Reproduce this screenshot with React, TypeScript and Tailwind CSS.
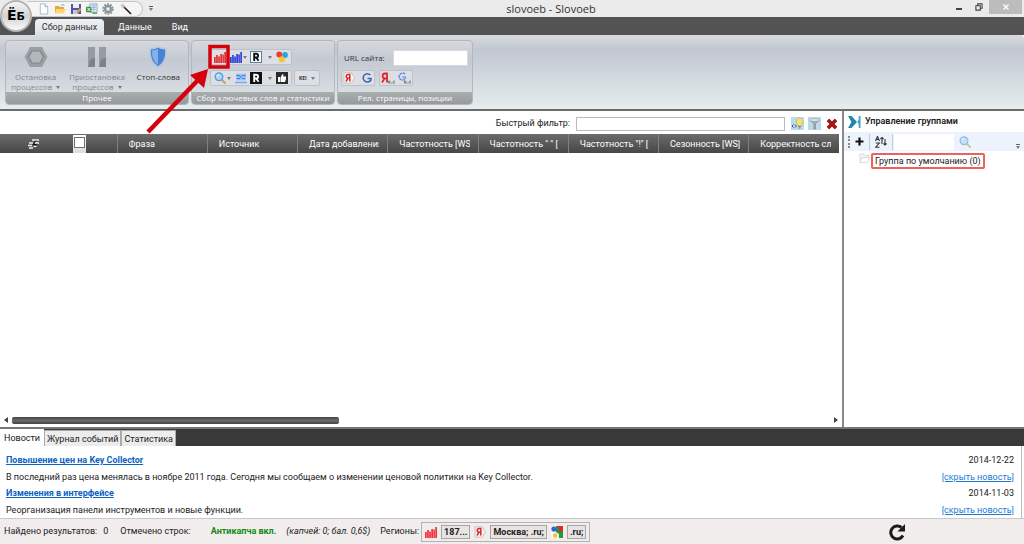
import React from "react";

const COLUMNS = [
  "Фраза",
  "Источник",
  "Дата добавления",
  "Частотность [WS",
  'Частотность " " [',
  'Частотность "!" [',
  "Сезонность [WS]",
  "Корректность сл",
];

const NEWS = [
  {
    title: "Повышение цен на Key Collector",
    text: "В последний раз цена менялась в ноябре 2011 года. Сегодня мы сообщаем о изменении ценовой политики на Key Collector.",
    date: "2014-12-22",
  },
  {
    title: "Изменения в интерфейсе",
    text: "Реорганизация панели инструментов и новые функции.",
    date: "2014-11-03",
  },
];

type IconProps = { className?: string };

function Bars({ color, className = "h-3 w-3" }: { color: string; className?: string }) {
  return (
    <svg viewBox="0 0 12 12" className={className} fill={color}>
      <rect x="0" y="6" width="1.7" height="6" />
      <rect x="2.1" y="4" width="1.7" height="8" />
      <rect x="4.2" y="5.5" width="1.7" height="6.5" />
      <rect x="6.3" y="3" width="1.7" height="9" />
      <rect x="8.4" y="3.5" width="1.5" height="8.5" />
      <rect x="10.3" y="1" width="1.7" height="11" />
    </svg>
  );
}

function Magnifier({ className = "h-3 w-3" }: IconProps) {
  return (
    <svg viewBox="0 0 12 12" className={className}>
      <path d="M7.5 7.5 11 11" stroke="#c9a368" strokeWidth="2" strokeLinecap="round" />
      <circle cx="5" cy="4.8" r="3.8" fill="#a9d6f8" stroke="#5f9bd6" strokeWidth="1.4" />
      <path d="M2.8 4.4a2.2 2.2 0 0 1 2.4-1.9" stroke="#fff" fill="none" />
    </svg>
  );
}

function Caret() {
  return (
    <svg viewBox="0 0 4 3" className="h-[3px] w-1 shrink-0" fill="#777b80">
      <path d="M0 0h4L2 3z" />
    </svg>
  );
}

function BoxedR({ dark }: { dark?: boolean }) {
  return (
    <svg viewBox="0 0 12 12" className="h-3 w-3">
      <rect x=".5" y=".5" width="11" height="11" fill={dark ? "#111" : "#fff"} stroke={dark ? "#111" : "#5b7f9b"} />
      <path
        d="M4.200 10V2.800h2a1.800 1.800 0 0 1 0 3.700H4.200M6.200 6.500 8.600 9.800"
        fill="none"
        stroke={dark ? "#fff" : "#111"}
        strokeWidth="1.9"
      />
    </svg>
  );
}

function YandexMark() {
  return (
    <svg viewBox="0 0 12 12" className="h-3 w-3">
      <path d="M1 .8h7.3L11.6 6 8.3 11.2H1z" fill="#f4f4f4" stroke="#b5b5b5" strokeWidth=".7" />
      <path d="M6.8 9.5v-7H5.1a1.7 1.7 0 0 0 0 3.7h1.7M5 6.2 3 9.5" fill="none" stroke="#e0262c" strokeWidth="1.5" />
    </svg>
  );
}

function GoogleMark() {
  return (
    <svg viewBox="0 0 12 12" className="h-3 w-3">
      <path d="M9.5 3A4.2 4.2 0 1 0 10 8V6.4H6.5" fill="none" stroke="#3c62b5" strokeWidth="1.5" />
    </svg>
  );
}

function YandexPosition() {
  return (
    <svg viewBox="0 0 14 13" className="h-[13px] w-3.5">
      <path d="M6 10.5V1.5H4a2.3 2.3 0 0 0 0 4.8h2M3.8 6.3 1 10.5" fill="none" stroke="#e0262c" strokeWidth="1.8" />
      <path d="M7.800 8.500v3M8 10.500l1.500-1M8.200 10.200l1.200 1.300M11 10.500v1.200M13 8.500v3.200" stroke="#555" fill="none" strokeWidth=".9" />
    </svg>
  );
}

function GooglePosition() {
  return (
    <svg viewBox="0 0 14 13" className="h-[13px] w-3.5">
      <path d="M8 2A3.500 3.500 0 1 0 8 7.200V5H5.500" fill="none" stroke="#5b86e5" strokeWidth="1.5" strokeDasharray="2.5 .7" />
      <path d="M7.800 8.500v3M8 10.500l1.500-1M8.200 10.200l1.200 1.300M11 10.500v1.200M13 8.500v3.200" stroke="#555" fill="none" strokeWidth=".9" />
    </svg>
  );
}

function QuickAccess() {
  const item = "flex h-3.5 w-3 items-center justify-center";
  return (
    <div className="ml-7 flex h-4 w-[115px] items-center gap-1 rounded-r-full border border-l-0 border-[#c6c6c6] bg-[#f5f5f5] pl-2.5">
      <button aria-label="Новый проект" className={item}>
        <svg viewBox="0 0 12 13" className="h-3 w-3">
          <path d="M2 1h5l3 3v8H2z" fill="#fff" stroke="#8ca9c9" strokeWidth=".8" />
          <path d="M7 1v3h3" fill="#dce8f5" stroke="#8ca9c9" strokeWidth=".8" />
        </svg>
      </button>
      <button aria-label="Открыть проект" className={item}>
        <svg viewBox="0 0 12 12" className="h-3 w-3">
          <path d="M1 3h4l1 1h4v6H1z" fill="#e9a93a" />
          <path d="M2.5 6H12l-2 4.5H1z" fill="#ffd879" />
          <path d="M7 2.5q2-2 3.5 0" stroke="#7da7cf" fill="none" />
        </svg>
      </button>
      <button aria-label="Сохранить" className={item}>
        <svg viewBox="0 0 12 12" className="h-3 w-3">
          <path d="M1 1h10v10H1z" fill="#58549f" />
          <path d="M3 1h6v4H3z" fill="#e9edf8" />
          <path d="M3 7h5v4H3z" fill="#c4c9e4" />
          <path d="m6 9 4-4 1.5 1.5L8 10.5z" fill="#d49a45" />
        </svg>
      </button>
      <button aria-label="Экспорт" className={item}>
        <svg viewBox="0 0 13 13" className="h-3 w-3">
          <path d="M4 1h8v9H4z" fill="#eaf2fa" stroke="#7397bd" strokeWidth=".8" />
          <path d="M6 3h5M6 5h5M6 7h5M8.5 2v7" stroke="#7fa5cf" strokeWidth=".7" />
          <path d="M0 4h6v6H0z" fill="#379543" />
          <path d="m1.5 5.2 3 3.6m0-3.6-3 3.6" stroke="#fff" />
          <path d="M7 11h5" stroke="#4f9e55" strokeWidth="1.5" />
        </svg>
      </button>
      <button aria-label="Настройки" className={item}>
        <svg viewBox="0 0 12 12" className="h-3 w-3">
          <circle cx="6" cy="6" r="4.8" fill="none" stroke="#879292" strokeWidth="1.8" strokeDasharray="1.9 1.1" />
          <circle cx="6" cy="6" r="3.1" fill="#b9c2c2" stroke="#879292" strokeWidth="1.8" />
          <circle cx="6" cy="6" r="1.2" fill="#f5f5f5" />
        </svg>
      </button>
      <button aria-label="Мастер" className={`${item} ml-0.5`}>
        <svg viewBox="0 0 12 12" className="h-3 w-3">
          <path d="m4 4 7 7" stroke="#222" strokeWidth="1.7" />
          <path d="M3 .5v5M.5 3h5M1.2 1.2l3.6 3.6" stroke="#c98c8c" strokeWidth=".6" />
        </svg>
      </button>
    </div>
  );
}

function TitleBar() {
  return (
    <header className="relative grid h-[17px] grid-cols-[1fr_auto_1fr] items-center bg-[#ebebeb]">
      <div className="flex items-center gap-1">
        <QuickAccess />
        <button aria-label="Настроить панель" className="flex h-3 w-2 flex-col items-center justify-center gap-px">
          <span className="h-px w-1 bg-[#555]" />
          <Caret />
        </button>
      </div>
      <h1 className="pl-[78px] font-['Open_Sans','Noto_Sans',sans-serif] text-[11px] leading-4 text-[#333]">slovoeb - Slovoeb</h1>
      <div className="flex items-start justify-end self-start">
        <button aria-label="Свернуть" className="flex h-3.5 w-5 items-end justify-center pb-1">
          <span className="h-0.5 w-1.5 bg-[#444]" />
        </button>
        <button aria-label="Восстановить" className="flex h-3.5 w-5 items-center justify-center">
          <svg viewBox="0 0 9 9" className="h-2 w-2" fill="none" stroke="#444" strokeWidth="1.2">
            <path d="M1 3h5v5H1zM3 3V1h5v5H6" />
          </svg>
        </button>
        <button aria-label="Закрыть" className="mr-0.5 flex h-3.5 w-[33px] items-center justify-center bg-[#bcbcbc]">
          <svg viewBox="0 0 6 6" className="h-1.5 w-1.5" stroke="#fff" strokeWidth="1.4">
            <path d="m.5.5 5 5m0-5-5 5" />
          </svg>
        </button>
      </div>
      <button className="absolute left-0 top-0 z-10 flex size-8 items-center justify-center rounded-full border-2 border-[#b4b4b4] bg-linear-to-b from-[#f6f6f6] via-[#d2d2d2] to-[#fafafa] font-['DejaVu_Sans',sans-serif] text-[14px] leading-4 font-bold text-black">
        <span>Ё<span className="text-[11px]">Б</span></span>
      </button>
    </header>
  );
}

function RibbonTabs() {
  return (
    <nav className="flex h-[18px] items-end bg-[#535353] pl-[35px] text-[9px] leading-4 text-white">
      <button className="h-4 w-[69px] rounded-t-sm bg-linear-to-b from-[#eef2f4] to-[#dbe0e4] text-[#333]">Сбор данных</button>
      <button className="h-4 pl-3.5">Данные</button>
      <button className="h-4 pl-5">Вид</button>
    </nav>
  );
}

function RibbonGroup({ title, className, children }: { title: string; className: string; children: React.ReactNode }) {
  return (
    <section
      className={`flex flex-col overflow-hidden rounded-sm border border-[#b3b8bc] bg-linear-to-b from-[#d5d9dd] via-[#c4c9d2] via-30% to-[#e0e5e8] ${className}`}
    >
      <div className="flex-1">{children}</div>
      <h2 className="h-3 bg-linear-to-b from-[#a9aeaf] to-[#969a9b] text-center leading-3 whitespace-nowrap text-white">
        {title}
      </h2>
    </section>
  );
}

const toolBox = "flex h-4 items-center rounded-xs border border-[#bcc2c7] bg-[#dce0e4]";

function Ribbon() {
  return (
    <div className="flex h-[74px] gap-0.5 rounded-tr-sm bg-linear-to-b from-[#d8dce0] via-[#c2c7d1] via-20% to-[#e5edef] px-[5px] pt-[5px] pb-1 font-['Open_Sans','Noto_Sans',sans-serif] text-[8px] leading-[10px] text-[#333]">
      <RibbonGroup title="Прочее" className="w-[184px]">
        <div className="flex justify-around pt-[5px]">
          <button disabled className="flex w-[58px] flex-col items-center gap-1 text-[#84898e]">
            <svg viewBox="0 0 24 22" className="h-[22px] w-6">
              <path d="M6 1h12l5.5 10L18 21H6L.5 11z" fill="#9b9fa4" />
              <path d="M8 5h8l3.5 6L16 17H8l-3.5-6z" fill="#b3b7bb" stroke="#7f8388" strokeWidth="1.2" />
            </svg>
            <span>
              Остановка
              <br />
              <span className="inline-flex items-center gap-1">
                процессов <Caret />
              </span>
            </span>
          </button>
          <button disabled className="flex w-[62px] flex-col items-center gap-1 text-[#84898e]">
            <svg viewBox="0 0 20 22" className="h-[22px] w-5">
              <path d="M1 1h7v20H1zM12 1h7v20h-7z" fill="#989ca1" />
              <path d="M2 19q0-8 6-7v9H1zM13 19q0-8 6-7v9h-7z" fill="#7f8388" />
            </svg>
            <span>
              Приостановка
              <br />
              <span className="inline-flex items-center gap-1">
                процессов <Caret />
              </span>
            </span>
          </button>
          <button className="flex w-[58px] flex-col items-center gap-1">
            <svg viewBox="0 0 20 24" className="h-[22px] w-5">
              <path d="M10 1q4 2.500 8.500 2c.8 9-1.500 16-8.500 20C3 19 .7 12 1.500 3 6 3.500 10 1 10 1z" fill="#4a82cf" stroke="#b2c8e2" strokeWidth="1.5" />
              <path d="M10 3q-3 2-6.500 2c-.3 6 1 12 6.500 15.500z" fill="#82b2ee" />
            </svg>
            <span>Стоп-слова</span>
          </button>
        </div>
      </RibbonGroup>

      <RibbonGroup title="Сбор ключевых слов и статистики" className="w-[144px]">
        <div className="flex flex-col gap-[5px] pt-2 pl-[18px]">
          <div className={`${toolBox} w-[82px] justify-between px-[3px]`}>
            <button aria-label="Пакетный сбор слов Wordstat">
              <Bars color="#e42c30" />
            </button>
            <button aria-label="Сбор статистики Wordstat" className="flex items-center gap-px">
              <Bars color="#3340d8" />
              <Caret />
            </button>
            <button aria-label="Rambler" className="flex items-center gap-1.5">
              <BoxedR />
              <Caret />
            </button>
            <button aria-label="Источники">
              <svg viewBox="0 0 12 12" className="h-3 w-3">
                <circle cx="3.200" cy="3.500" r="2.900" fill="#ef3b32" />
                <circle cx="9" cy="4" r="2.900" fill="#2aa5e0" />
                <circle cx="5.800" cy="8.600" r="3" fill="#f8c62c" />
              </svg>
            </button>
          </div>
          <div className="flex gap-0.5">
            <div className={`${toolBox} w-[82px] justify-between px-[3px]`}>
              <button aria-label="Поисковые подсказки" className="flex items-center gap-px">
                <Magnifier />
                <Caret />
              </button>
              <button aria-label="Таблица">
                <svg viewBox="0 0 12 12" className="h-3 w-3">
                  <rect x="1" y="1.500" width="10" height="7" fill="#9fc2f7" />
                  <path d="M1.500 3.500h3l1 2 2-2h3M2 6.500h3M7 6.500h3" stroke="#3f79d6" strokeWidth="1" fill="none" />
                  <path d="M0 10.500h12" stroke="#7ea8ee" strokeWidth="1.500" />
                </svg>
              </button>
              <button aria-label="Rambler Adstat" className="flex items-center gap-1.5">
                <BoxedR dark />
                <Caret />
              </button>
              <button aria-label="Рекомендации">
                <svg viewBox="0 0 12 12" className="h-3 w-3">
                  <path d="M0 0h12v12H0z" fill="#2b2b2b" />
                  <path d="M2 5h2v5H2zM4.500 5.500 6.500 2q1.500 0 .8 2.500H10q.5 3-1 5.500H4.500z" fill="#fff" />
                </svg>
              </button>
            </div>
            <button className={`${toolBox} gap-1 px-1 text-[5px] font-bold`}>
              KEI <Caret />
            </button>
          </div>
        </div>
      </RibbonGroup>

      <RibbonGroup title="Рел. страницы, позиции" className="w-[136px]">
        <div className="flex flex-col gap-1 pt-[9px] pl-[3px]">
          <label className="flex items-center gap-2 pl-[3px] whitespace-nowrap">
            URL сайта:
            <input type="text" className="h-4 w-[75px] border border-[#d5d8dc] bg-white px-1 outline-none" />
          </label>
          <div className="flex gap-1">
            <div className={`${toolBox} gap-1.5 px-px`}>
              <button aria-label="Страница Яндекс"><YandexMark /></button>
              <button aria-label="Страница Google"><GoogleMark /></button>
            </div>
            <div className={`${toolBox} gap-0.5 px-px`}>
              <button aria-label="Позиция Яндекс"><YandexPosition /></button>
              <button aria-label="Позиция Google"><GooglePosition /></button>
            </div>
          </div>
        </div>
      </RibbonGroup>
    </div>
  );
}

function FilterBar() {
  return (
    <div className="flex h-[23px] items-center justify-end gap-1 pt-0.5 pr-1 text-[9px] text-[#222]">
      <label htmlFor="quick-filter">Быстрый фильтр:</label>
      <input id="quick-filter" type="text" className="ml-0.5 h-3.5 w-[209px] border border-[#b9bac0] bg-white px-1 outline-none" />
      <button aria-label="Подсветка" className="ml-0.5 flex h-[13px] w-[13px] items-center justify-center bg-[#b9dbec]">
        <svg viewBox="0 0 13 13" className="h-[13px] w-[13px]">
          <path d="M8.500 1a3.500 3.500 0 0 1 2 6.200L10 9H7.200l-.5-1.800A3.500 3.500 0 0 1 8.500 1z" fill="#f5e36a" stroke="#c6ac3d" strokeWidth=".6" />
          <path d="M7.300 9.500h2.500M7.500 11h2" stroke="#777" />
          <path d="M2.500 7.500 1 9l1.500 1.500m1.500-3L5.500 9 4 10.500" fill="none" stroke="#345" strokeWidth=".9" />
        </svg>
      </button>
      <button aria-label="Фильтр" className="flex h-[13px] w-[13px] items-center justify-center bg-[#b9dbec]">
        <svg viewBox="0 0 13 13" className="h-[13px] w-[13px]">
          <path d="M1.500 3h10L7.500 6.500V12H5.800V6.500z" fill="#a9adb0" stroke="#7c8286" strokeWidth=".6" />
          <ellipse cx="6.500" cy="3" rx="5" ry="1.400" fill="#e8eaec" stroke="#8c9194" strokeWidth=".6" />
        </svg>
      </button>
      <button aria-label="Сбросить фильтр" className="flex h-[13px] w-[13px] items-center justify-center">
        <svg viewBox="0 0 12 12" className="h-3 w-3">
          <path d="m2 2 8 8m0-8-8 8" stroke="#7d0c0c" strokeWidth="3.400" />
          <path d="m2 2 8 8m0-8-8 8" stroke="#b81414" strokeWidth="2" />
        </svg>
      </button>
    </div>
  );
}

function PhraseTable() {
  return (
    <div className="pr-[3px]">
      <table className="w-full table-fixed border-collapse text-[9px] leading-[18px] text-white">
        <thead>
          <tr className="h-[19px] bg-linear-to-b from-[#6c6c6c] to-[#474747]">
            <th className="w-[73px] p-0" aria-label="Порядок">
              <svg viewBox="0 0 11 10" className="ml-7 h-2.5 w-[11px]">
                <path d="M4 1h7M1 4h4M7 4h4M0 6.500h4M1 9h4" stroke="#f0f0f0" strokeWidth="1.700" />
                <path d="m8 1.500-3 4h4" stroke="#111" fill="none" />
                <path d="M5.500 7.500h3" stroke="#f0f0f0" strokeWidth="1.200" />
              </svg>
            </th>
            <th className="w-[44px] p-0">
              <span className="flex h-[18px] w-[13px] justify-center bg-linear-to-b from-white to-[#e0dbd2] pt-0.5">
                <input
                  type="checkbox"
                  aria-label="Отметить все"
                  className="size-[11px] appearance-none border border-[#707070] bg-white"
                />
              </span>
            </th>
            {COLUMNS.map((name) => (
              <th key={name} className="border-l border-[#808080] py-0 pr-2 pl-[11px] text-left font-normal">
                <span className="block overflow-hidden whitespace-nowrap">{name}</span>
              </th>
            ))}
          </tr>
        </thead>
      </table>
    </div>
  );
}

function Scrollbar() {
  return (
    <div className="flex h-[14px] items-center gap-1 px-1">
      <button aria-label="Влево">
        <svg viewBox="0 0 4 6" className="h-1.5 w-1" fill="#444"><path d="M4 0v6L0 3z" /></svg>
      </button>
      <div className="flex-1">
        <div className="h-[7px] w-[40%] rounded-xs bg-linear-to-b from-[#444] via-[#6a6a6a] to-[#444]" />
      </div>
      <button aria-label="Вправо">
        <svg viewBox="0 0 4 6" className="h-1.5 w-1" fill="#444"><path d="M0 0v6l4-3z" /></svg>
      </button>
    </div>
  );
}

function GroupsPanel() {
  return (
    <aside className="w-[182px] shrink-0 border-l-2 border-[#8a8a8a] bg-white text-[9px] text-[#222]">
      <h2 className="flex h-[21px] items-center gap-1 pl-1 text-[9px] font-semibold">
        <svg viewBox="0 0 13 12" className="h-3 w-[13px]">
          <path d="M0 0h3.500L9 6l-5.500 6H0l3.500-6z" fill="#2186ad" />
          <path d="M12.500 0v12h-1.800V8.500L9.500 6l1.200-2.500V0z" fill="#3da3c5" />
        </svg>
        Управление группами
      </h2>
      <div className="flex h-[19px] items-center gap-[5px] bg-[#edf3fc] pl-1">
        <span className="h-3 border-l-2 border-dotted border-[#888]" />
        <button aria-label="Добавить группу">
          <svg viewBox="0 0 9 9" className="h-[9px] w-[9px]"><path d="M4.500.5v8M.5 4.500h8" stroke="#111" strokeWidth="2.200" /></svg>
        </button>
        <span className="h-4 w-px bg-[#c4cad2]" />
        <button aria-label="Сортировка">
          <svg viewBox="0 0 12 12" className="h-3 w-3" fill="none" stroke="#333" strokeWidth="1.100">
            <path d="M.5 5 2.500.5 4.500 5M1.200 3.500h2.600M.8 7h3.500L.8 11.200h3.700" />
            <path d="M7 8V1.500M5.500 3 7 1.500 8.500 3M10 3v6M8.500 7.500 10 9l1.500-1.500" />
          </svg>
        </button>
        <span className="h-4 w-px bg-[#c4cad2]" />
        <input type="text" aria-label="Поиск группы" className="-ml-1 h-4 w-[60px] bg-white px-1 outline-none" />
        <button aria-label="Найти"><Magnifier className="h-3 w-3 opacity-60" /></button>
        <button aria-label="Ещё" className="mr-1 mb-0.5 ml-auto flex flex-col items-center gap-px self-end">
          <span className="h-px w-1 bg-[#666]" />
          <Caret />
        </button>
      </div>
      <ul className="pt-0.5 pl-[15px]">
        <li className="flex items-start gap-px">
          <svg viewBox="0 0 11 11" className="h-[11px] w-[11px] opacity-50">
            <path d="M1 9V1h4l1 1.500h4V5" fill="#f1f1f1" stroke="#aaa" strokeWidth=".8" />
            <path d="M3 4.500h7.500L8.500 9.500H1z" fill="#fff" stroke="#aaa" strokeWidth=".8" />
          </svg>
          <button className="h-4 rounded-xs border-2 border-[#ef6060] px-0.5 leading-3 whitespace-nowrap">Группа по умолчанию (0)</button>
        </li>
      </ul>
    </aside>
  );
}

function NewsPanel() {
  const tab = "h-4 border border-b-0 border-[#aaa] bg-[#ececec] px-0.5";
  return (
    <section className="text-[9px] text-[#222]">
      <div className="flex h-[19px] items-end border-t-2 border-[#777] bg-[#393939] leading-4">
        <button className="h-[17px] bg-white px-1">Новости</button>
        <button className={tab}>Журнал событий</button>
        <button className={tab}>Статистика</button>
      </div>
      <div className="mr-0.5 h-[72px] overflow-hidden border-r border-[#bbb] bg-white pt-1.5 pr-[7px] pl-1.5 leading-4">
        {NEWS.map((item) => (
          <article key={item.date} className="grid h-[33px] grid-cols-[1fr_auto]">
            <h3 className="font-bold"><a href="#news" className="text-[#0b63c5] underline">{item.title}</a></h3>
            <time className="text-right">{item.date}</time>
            <p>{item.text}</p>
            <a href="#hide" className="text-[#1a7ad8] underline">[скрыть новость]</a>
          </article>
        ))}
      </div>
    </section>
  );
}

function StatusBar() {
  const region = "h-3.5 border border-[#a8a5a5] bg-[#e7e4e4] px-0.5 text-[9px] leading-3 font-bold text-[#222]";
  return (
    <footer className="flex h-[26px] items-center border-t border-[#c9c9c9] bg-[#f0edec] pl-1 text-[9px] whitespace-nowrap text-[#222]">
      <span>Найдено результатов:</span>
      <span className="ml-1.5">0</span>
      <span className="ml-3">Отмечено строк:</span>
      <strong className="ml-5 text-[#128a12]">Антикапча вкл.</strong>
      <em className="ml-2.5">(капчей: 0; бал. 0,6$)</em>
      <span className="ml-2.5">Регионы:</span>
      <div className="ml-0.5 flex h-5 items-center gap-1 border border-[#b5b2b2] px-[3px]">
        <Bars color="#ee3338" />
        <button className={region}>187...</button>
        <YandexMark />
        <button className={region}>Москва; .ru;</button>
        <svg viewBox="0 0 12 12" className="h-3 w-3">
          <path d="M5 0h7v12H8V8l-3-2z" fill="#22993f" />
          <path d="M6 0h6v5L9 6z" fill="#d92e26" />
          <circle cx="3" cy="3" r="2.600" fill="#2c66d8" />
          <path d="M0 6h4l2 3-3 3H1z" fill="#fff" />
          <circle cx="4" cy="9.500" r="2.200" fill="#f6c22a" />
        </svg>
        <button className={region}>.ru;</button>
      </div>
      <button aria-label="Обновить" className="mr-[118px] ml-auto">
        <svg viewBox="0 0 18 18" className="h-[18px] w-[18px]">
          <path d="M15 12.500A6.500 6.500 0 1 1 13.500 4.500" fill="none" stroke="#1b1b1b" strokeWidth="3" />
          <path d="M17 1v7.500H9.500z" fill="#1b1b1b" />
        </svg>
      </button>
    </footer>
  );
}

export default function App() {
  return (
    <div className="relative flex min-h-screen flex-col overflow-hidden bg-white font-['Roboto','Noto_Sans',sans-serif]">
      <TitleBar />
      <RibbonTabs />
      <Ribbon />
      <main className="flex flex-1 border-t-2 border-[#6c6c6c]">
        <div className="flex min-w-0 flex-1 flex-col">
          <FilterBar />
          <PhraseTable />
          <div className="flex-1" />
          <Scrollbar />
        </div>
        <GroupsPanel />
      </main>
      <NewsPanel />
      <StatusBar />
      <svg viewBox="0 0 90 94" className="pointer-events-none absolute top-[42px] left-[144px] h-[94px] w-[90px]">
        <rect x="66" y="4.500" width="18" height="20.500" fill="none" stroke="#d5000b" strokeWidth="3.500" />
        <path d="M4 90 54 38" stroke="#d5000b" strokeWidth="4.500" />
        <path d="M64 27 60 46 46 33z" fill="#d5000b" />
      </svg>
    </div>
  );
}
